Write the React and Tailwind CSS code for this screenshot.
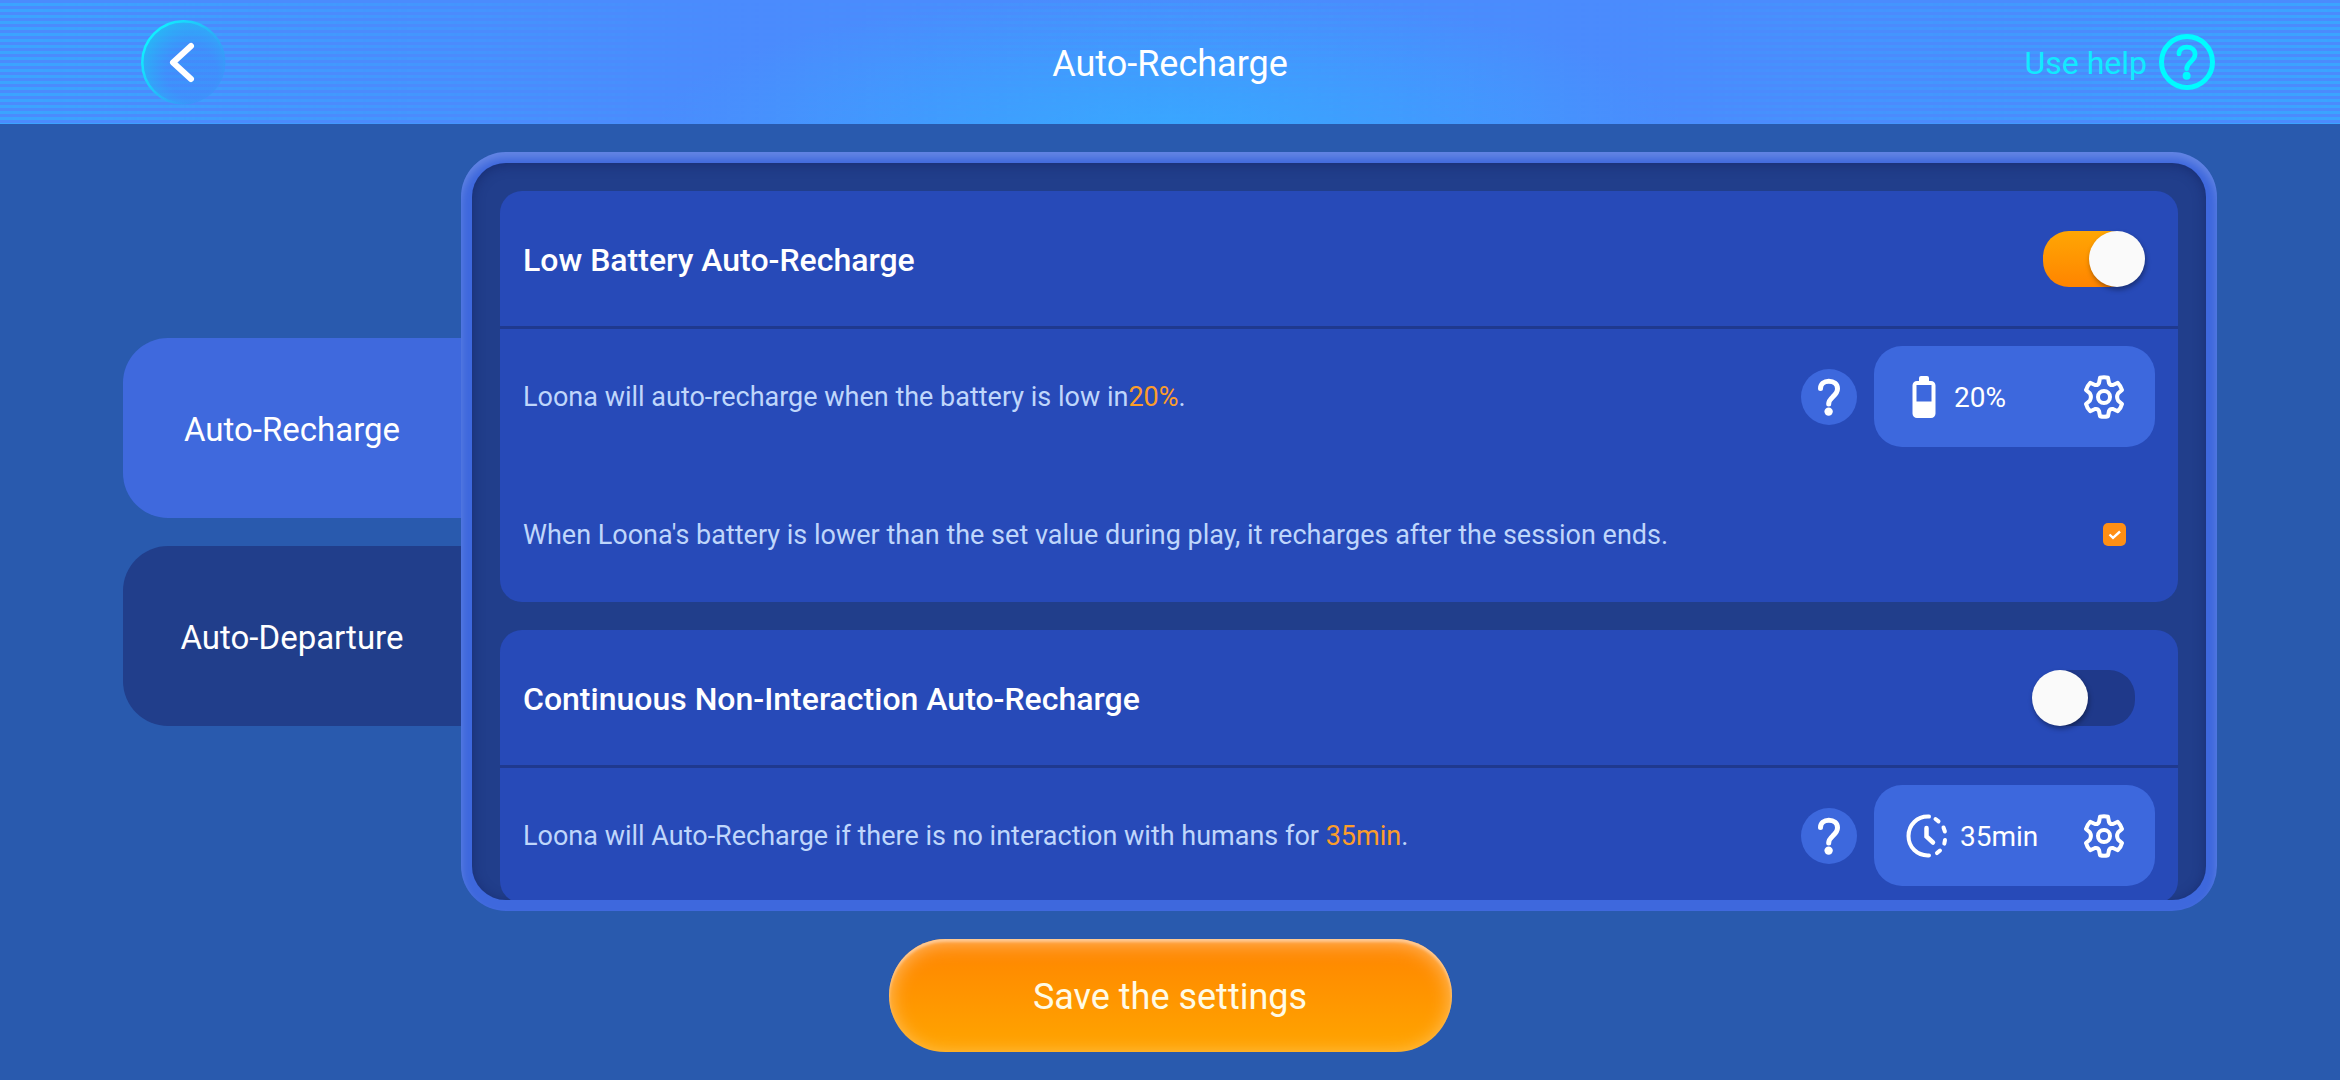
import { useState } from "react";

function QuestionMark({ className }) {
  return (
    <svg viewBox="0 0 24 38" fill="none" className={className} aria-hidden="true">
      <path
        d="M3.500 10.500C3.500 6 7 3.200 11.800 3.200c5 0 8.700 2.900 8.700 7.600 0 3.800-2.200 5.800-4.800 8.200-2.600 2.400-4 4.200-4 7"
        stroke="currentColor"
        strokeWidth="5"
        strokeLinecap="round"
      />
      <circle cx="11.600" cy="33.600" r="4.2" fill="currentColor" />
    </svg>
  );
}

function BatteryIcon() {
  return (
    <svg viewBox="0 0 24 42" className="mx-1.5 h-[42px] w-6" aria-hidden="true">
      <path
        fill="white"
        fillRule="evenodd"
        d="M9 0h6a2 2 0 0 1 2 2v3h2a4.500 4.500 0 0 1 4.500 4.500v28a4.500 4.500 0 0 1-4.500 4.500H5A4.500 4.500 0 0 1 .5 37.500v-28A4.500 4.500 0 0 1 5 5h2V2a2 2 0 0 1 2-2ZM4.500 9v16.500h15V9Z"
      />
    </svg>
  );
}

function TimerIcon() {
  return (
    <svg viewBox="0 0 42 44" className="h-11 w-[42px]" fill="none" stroke="white" strokeWidth="4" strokeLinecap="round" aria-hidden="true">
      <path d="M23 2.600C11 2 2.500 11 2.500 22S11 42 23 41.400" />
      <path d="M20.500 14v8.500l6.500 6" strokeWidth="4.500" />
      <path d="m29.500 5 3 2.400M37.500 13.500l1.400 4M39 26l-.7 3.600M34 36.500l-3 2.600" strokeWidth="4" />
    </svg>
  );
}

function GearIcon() {
  return (
    <svg viewBox="0 0 42 44" className="h-11 w-[42px]" fill="none" stroke="white" strokeWidth="4" strokeLinejoin="round" aria-hidden="true">
      <path d="M17 2.800Q21 1.800 25 2.800L26 8Q27 10.500 30 10L34.800 7.800Q38 11 39 15L35.200 18.300Q33 22 35.200 25.700L39 29Q38 33 34.800 36.200L30 34Q27 33.500 26 36L25 41.200Q21 42.200 17 41.200L16 36Q15 33.500 12 34L7.200 36.200Q4 33 3 29L6.800 25.700Q9 22 6.800 18.300L3 15Q4 11 7.200 7.800L12 10Q15 10.500 16 8Z" />
      <circle cx="21" cy="22" r="6" />
    </svg>
  );
}

function Toggle({ label, checked, onChange }) {
  return (
    <label className="relative mr-[43px] block h-14 w-[92px] cursor-pointer">
      <input
        type="checkbox"
        role="switch"
        aria-label={label}
        checked={checked}
        onChange={(e) => onChange(e.target.checked)}
        className="peer absolute inset-0 h-full w-full cursor-pointer appearance-none rounded-[26px] bg-[#1f398a] checked:bg-linear-to-b checked:from-[#ffa604] checked:to-[#ff8400]"
      />
      <span className="pointer-events-none absolute -left-[11px] top-0 h-14 w-14 rounded-full bg-[#fafafa] shadow-[1px_3px_5px_rgba(0,0,0,0.35)] peer-checked:left-[46px]" />
    </label>
  );
}

function HelpButton({ label }) {
  return (
    <button
      type="button"
      aria-label={label}
      className="flex h-14 w-14 items-center justify-center rounded-full bg-[#3d68dd] text-white"
    >
      <QuestionMark className="h-[38px] w-6" />
    </button>
  );
}

function ValueButton({ icon, value }) {
  return (
    <button
      type="button"
      className="mr-[23px] ml-[17px] flex h-[101px] w-[281px] items-center gap-3 rounded-[28px] bg-[#3d68dd] pr-[30px] pl-8 text-[28px] text-white"
    >
      {icon}
      <span className="flex-1 pt-0.5 text-left">{value}</span>
      <GearIcon />
    </button>
  );
}

function Card({ title, checked, onChange, children }) {
  return (
    <section className="shrink-0 overflow-hidden rounded-[22px] bg-[#274ab8]">
      <div className="flex h-[135px] items-center justify-between">
        <h2 className="pt-0.5 pl-[23px] text-[32px] font-medium text-white">{title}</h2>
        <Toggle label={title} checked={checked} onChange={onChange} />
      </div>
      <div className="h-[3px] bg-[#1f398f]" />
      {children}
    </section>
  );
}

export default function App() {
  const [tab, setTab] = useState("recharge");
  const [lowBattery, setLowBattery] = useState(true);
  const [afterSession, setAfterSession] = useState(true);
  const [idle, setIdle] = useState(false);

  const tabs = [
    { id: "recharge", name: "Auto-Recharge" },
    { id: "departure", name: "Auto-Departure" },
  ];

  return (
    <div className="flex h-screen flex-col bg-[#295aae] font-['Roboto',sans-serif]">
      {/* Header */}
      <header className="relative flex h-[124px] shrink-0 items-center justify-between bg-[#4b8bfd] px-[125px]">
        <div className="absolute inset-0 bg-[radial-gradient(ellipse_22%_110%_at_50%_105%,#38a8ff,transparent)]" />
        <div className="absolute inset-0 bg-[repeating-linear-gradient(to_bottom,transparent_0px,transparent_3px,#3ba4ff_3px,#3ba4ff_6px)] mask-[linear-gradient(to_right,black_0%,transparent_32%,rgb(0_0_0/0.4)_50%,transparent_68%,black_100%)]" />
        <button
          type="button"
          aria-label="Back"
          className="relative ml-4 flex h-[85px] w-[85px] items-center justify-center rounded-full"
        >
          <svg viewBox="0 0 85 85" className="h-[85px] w-[85px]" fill="none" aria-hidden="true">
            <defs>
              <linearGradient id="ring" x1="0.1" y1="0.2" x2="0.85" y2="0.75">
                <stop offset="0" stopColor="#10f0ff" />
                <stop offset="0.4" stopColor="#1fc8fa" />
                <stop offset="1" stopColor="#2f9df5" stopOpacity="0" />
              </linearGradient>
              <radialGradient id="glow" cx="0.6" cy="0.62" r="0.66">
                <stop offset="0.45" stopColor="#3d8cfa" stopOpacity="0.6" />
                <stop offset="1" stopColor="#22bdf5" stopOpacity="0.9" />
              </radialGradient>
            </defs>
            <circle cx="42.500" cy="42.500" r="42" fill="url(#glow)" />
            <circle cx="42.500" cy="42.500" r="41.200" stroke="url(#ring)" strokeWidth="2.500" />
            <path d="M50 26 32 42.500 50 59" stroke="white" strokeWidth="6" strokeLinecap="round" strokeLinejoin="round" />
          </svg>
        </button>
        <h1 className="pointer-events-none absolute inset-x-0 pt-1 text-center text-[36px] text-white">
          Auto-Recharge
        </h1>
        <button type="button" className="relative flex items-center gap-3 text-[32px] text-[#12eaff]">
          <span className="pt-0.5">Use help</span>
          <span className="flex h-14 w-14 items-center justify-center rounded-full border-5 border-[#00fbff] text-[#00fbff]">
            <QuestionMark className="h-9 w-6" />
          </span>
        </button>
      </header>

      {/* Tabs and settings panel */}
      <main className="mt-7 flex min-h-0 flex-1 px-[123px]">
        <nav className="flex w-[338px] shrink-0 flex-col justify-center gap-7">
          {tabs.map((t) => (
            <button
              key={t.id}
              type="button"
              onClick={() => setTab(t.id)}
              className={`h-[180px] rounded-l-[45px] pt-1 text-[33px] text-white ${
                tab === t.id ? "bg-[#3f69dd]" : "bg-[#213e8b]"
              }`}
            >
              {t.name}
            </button>
          ))}
        </nav>

        <div className="flex min-w-0 flex-1 rounded-[45px] bg-[#3e68dd] p-[11px] shadow-[inset_0_6px_8px_rgba(255,255,255,0.2)]">
          <div className="flex min-w-0 flex-1 flex-col gap-7 overflow-hidden rounded-[34px] bg-[#213e8b] px-7 pt-7 shadow-[inset_0_2px_12px_rgba(15,30,90,0.5)]">
            <Card title="Low Battery Auto-Recharge" checked={lowBattery} onChange={setLowBattery}>
              <div className="flex h-[135px] items-center">
                <p className="flex-1 pt-0.5 pl-[23px] text-[27px] text-[#bfd6fb]">
                  Loona will auto-recharge when the battery is low in
                  <span className="text-[#fc9d2a]">20%</span>.
                </p>
                <HelpButton label="About low battery recharge" />
                <ValueButton icon={<BatteryIcon />} value="20%" />
              </div>
              <label className="mt-[3px] flex h-[135px] items-center">
                <span className="flex-1 pt-0.5 pl-[23px] text-[27px] text-[#bfd6fb]">
                  When Loona's battery is lower than the set value during play, it recharges after the session ends.
                </span>
                <span className="relative mr-[52px] block h-[23px] w-[23px]">
                  <input
                    type="checkbox"
                    checked={afterSession}
                    onChange={(e) => setAfterSession(e.target.checked)}
                    className="peer block h-full w-full appearance-none rounded-[5px] bg-[#1f398a] checked:bg-[#ff8f14]"
                  />
                  <svg viewBox="0 0 23 23" className="pointer-events-none absolute inset-0 hidden peer-checked:block" fill="none" aria-hidden="true">
                    <path d="m6.500 11.500 3.500 3.300 7-6.300" stroke="white" strokeWidth="2.400" />
                  </svg>
                </span>
              </label>
            </Card>

            <Card title="Continuous Non-Interaction Auto-Recharge" checked={idle} onChange={setIdle}>
              <div className="flex h-[135px] items-center">
                <p className="flex-1 pt-0.5 pl-[23px] text-[27px] text-[#bfd6fb]">
                  Loona will Auto-Recharge if there is no interaction with humans for{" "}
                  <span className="text-[#fc9d2a]">35min</span>.
                </p>
                <HelpButton label="About non-interaction recharge" />
                <ValueButton icon={<TimerIcon />} value="35min" />
              </div>
            </Card>
          </div>
        </div>
      </main>

      <footer className="flex shrink-0 justify-center py-7">
        <button
          type="button"
          className="h-[113px] w-[563px] rounded-full bg-linear-to-b from-[#ff8400] to-[#ffa500] pt-0.5 text-[36px] text-[#fffbe6] shadow-[inset_0_3px_3px_rgba(255,225,200,0.6),inset_0_4px_20px_rgba(255,225,190,0.6)]"
        >
          Save the settings
        </button>
      </footer>
    </div>
  );
}
